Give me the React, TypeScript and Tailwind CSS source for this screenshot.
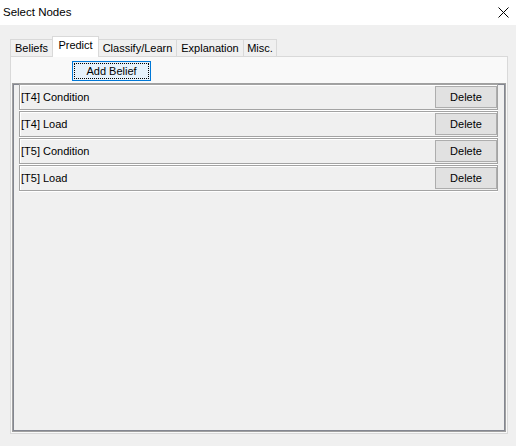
import React, { useState } from "react";

const tabs = [
  { label: "Beliefs", w: "w-[43px]" },
  { label: "Predict", w: "w-[47px]" },
  { label: "Classify/Learn", w: "w-[79px]" },
  { label: "Explanation", w: "w-[68px]" },
  { label: "Misc.", w: "w-[34px]" },
];

const initialBeliefs = ["[T4] Condition", "[T4] Load", "[T5] Condition", "[T5] Load"];

const App: React.FC = () => {
  const [active, setActive] = useState(1);
  const [beliefs, setBeliefs] = useState<string[]>(initialBeliefs);

  return (
    <div
      className="w-[516px] h-[446px] bg-[#f0f0f0] text-black overflow-hidden"
      style={{ fontFamily: '"Liberation Sans", Arial, sans-serif' }}
    >
      {/* title bar */}
      <div className="h-[25px] bg-white flex items-center justify-between pl-[3px] pr-[7px]">
        <span className="text-[11.5px] leading-none">Select Nodes</span>
        <svg width="11" height="11" viewBox="0 0 11 11" className="block">
          <path d="M0.5 0.5 L10.5 10.5 M10.5 0.5 L0.5 10.5" stroke="#000" strokeWidth="1" fill="none" />
        </svg>
      </div>

      {/* tab strip */}
      <div className="pt-[10px] pl-[10px] flex items-end h-[31px]">
        {tabs.map((t, i) => {
          const sel = i === active;
          return (
            <div
              key={t.label}
              onClick={() => setActive(i)}
              className={`${t.w} ${i > 0 ? "-ml-px" : ""} ${
                sel
                  ? "h-[21px] bg-white z-10 pb-[4px] -mb-px"
                  : "h-[17px] bg-[#f0f0f0] pt-px"
              } relative border border-b-0 border-[#d9d9d9] flex items-center justify-center text-[11px] leading-none cursor-default`}
            >
              {t.label}
            </div>
          );
        })}
      </div>

      {/* tab content */}
      <div className="ml-[10px] w-[498px] h-[378px] border border-[#d9d9d9] bg-[#f9f9f9] flex flex-col">
        <div className="h-[26px] pl-[61px] pt-[4px]">
          <button
            onClick={() => setBeliefs(b => [...b, `[T${b.length + 1}] Condition`])}
            className="w-[79px] h-[20px] border border-[#0078d7] bg-[#e5f1fb] p-px block"
          >
            <div className="w-full h-full border border-dotted border-black flex items-center justify-center text-[11px] leading-none">
              Add Belief
            </div>
          </button>
        </div>

        <div className="ml-px w-[494px] h-[349px] border border-[#a0a0a0] shadow-[inset_0_0_0_1px_#838690] bg-[#f0f0f0] pl-[6px] pr-[7px] flex flex-col gap-px">
          {beliefs.map((b, i) => (
            <div
              key={i}
              className="h-[26px] border border-[#a3a3a3] shadow-[inset_1px_1px_0_#ffffff,0_1px_0_#ffffff] flex items-center justify-between pl-[1px]"
            >
              <span className="text-[11px] leading-none">{b}</span>
              <button
                onClick={() => setBeliefs(list => list.filter((_, j) => j !== i))}
                className="w-[62px] h-[22px] border border-[#adadad] bg-[#e1e1e1] text-[11px] leading-none flex items-center justify-center"
              >
                Delete
              </button>
            </div>
          ))}
        </div>
      </div>
    </div>
  );
};

export default App;
